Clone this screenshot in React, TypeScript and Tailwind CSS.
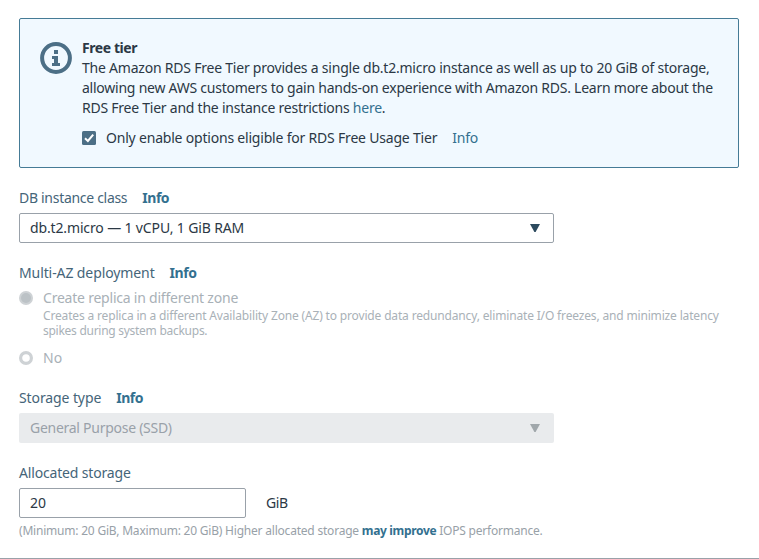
import React from "react";

function InfoLink() {
  return <a className="ml-[15px] font-bold tracking-[-0.45px] text-[#33708f]">Info</a>;
}

function Caret({ className }: { className: string }) {
  return (
    <svg width="10" height="8" viewBox="0 0 10 8" className={className}>
      <path d="M0 0H10L5.6 8H4.4Z" fill="currentColor" />
    </svg>
  );
}

export default function App() {
  return (
    <div className="h-[559px] w-[759px] overflow-hidden border-b border-[#99a1a9] bg-white px-[19px] pt-[18px] font-['Noto_Sans',sans-serif] text-[14px] leading-5 whitespace-nowrap text-[#2b3845]">
      <section className="flex h-[150px] w-[720px] rounded-[2px] border border-[#457b96] bg-[#f1f9ff] pt-[19px] pl-5">
        <svg width="32" height="32" viewBox="0 0 32 32" className="mt-1 mr-[10px] shrink-0 text-[#4c6f86]">
          <circle cx="16" cy="16" r="13.9" fill="none" stroke="currentColor" strokeWidth="4" />
          <path d="M14 8h4v4h-4zM12 14h6v7h2v3h-8v-3h2v-4h-2z" fill="currentColor" />
        </svg>
        <div>
          <h2 className="font-bold tracking-[-0.42px]">Free tier</h2>
          <p className="tracking-[-0.22px]">The Amazon RDS Free Tier provides a single db.t2.micro instance as well as up to 20 GiB of storage,</p>
          <p className="tracking-[-0.24px]">allowing new AWS customers to gain hands-on experience with Amazon RDS. Learn more about the</p>
          <p className="tracking-[-0.24px]">RDS Free Tier and the instance restrictions <a className="text-[#33708f]">here</a>.</p>
          <label className="mt-[10px] flex items-center tracking-[-0.2px]">
            <svg width="14" height="14" viewBox="0 0 14 14" className="mr-[10px]">
              <rect width="14" height="14" rx="1.5" fill="#4c6f86" />
              <path d="M3 7.2 5.9 10 11.2 3.7" fill="none" stroke="#fff" strokeWidth="2" />
            </svg>
            <span>Only enable options eligible for RDS Free Usage Tier</span>
            <a className="ml-[15px] text-[#33708f]">Info</a>
          </label>
        </div>
      </section>

      <div className="mt-5 text-[#456579]"><span className="tracking-[-0.3px]">DB instance class</span><InfoLink /></div>
      <div className="mt-[5px] flex h-[30px] w-[535px] items-center justify-between rounded-[2px] border border-[#99a1a9] pr-[13px] pl-[10px]">
        <span className="tracking-[-0.14px]">db.t2.micro — 1 vCPU, 1 GiB RAM</span>
        <Caret className="text-[#2c4a5e]" />
      </div>

      <div className="mt-5 text-[#456579]"><span className="tracking-[-0.1px]">Multi-AZ deployment</span><InfoLink /></div>
      <div className="mt-[5px] flex text-[#a9b1b7]">
        <svg width="14" height="14" viewBox="0 0 14 14" className="mt-[3px] mr-[10px]">
          <circle cx="7" cy="7" r="7" fill="#ced2d5" />
          <circle cx="7" cy="7" r="5" fill="#bcc2c6" />
        </svg>
        <div>
          <div className="tracking-[-0.22px]">Create replica in different zone</div>
          <div className="text-[12px] leading-[15px]">
            <p className="tracking-[-0.16px]">Creates a replica in a different Availability Zone (AZ) to provide data redundancy, eliminate I/O freezes, and minimize latency</p>
            <p className="tracking-[-0.27px]">spikes during system backups.</p>
          </div>
        </div>
      </div>
      <div className="mt-[10px] flex text-[#a9b1b7]">
        <svg width="14" height="14" viewBox="0 0 14 14" className="mt-[3px] mr-[10px]">
          <circle cx="7" cy="7" r="5.4" fill="#fff" stroke="#ced2d5" strokeWidth="3.2" />
        </svg>
        <span>No</span>
      </div>

      <div className="mt-5 text-[#456579]"><span className="tracking-[-0.1px]">Storage type</span><InfoLink /></div>
      <div className="mt-[5px] flex h-[30px] w-[535px] items-center justify-between rounded-[2px] bg-[#e9ebed] pr-[14px] pl-[11px] text-[#99a1a9]">
        <span className="tracking-[-0.27px]">General Purpose (SSD)</span>
        <Caret className="text-[#a0a7ab]" />
      </div>

      <div className="mt-5 tracking-[-0.17px] text-[#456579]">Allocated storage</div>
      <div className="mt-[5px] flex items-center">
        <div className="mr-5 flex h-[30px] w-[227px] items-center rounded-[2px] border border-[#99a1a9] pl-[10px]">20</div>
        <span className="tracking-[-0.4px]">GiB</span>
      </div>
      <p className="mt-[5px] text-[12px] leading-[15px] tracking-[-0.21px] text-[#98a1a8]">
        (Minimum: 20 GiB, Maximum: 20 GiB) Higher allocated storage <b className="tracking-[-0.33px] text-[#33708f]">may improve</b> IOPS performance.
      </p>
    </div>
  );
}
